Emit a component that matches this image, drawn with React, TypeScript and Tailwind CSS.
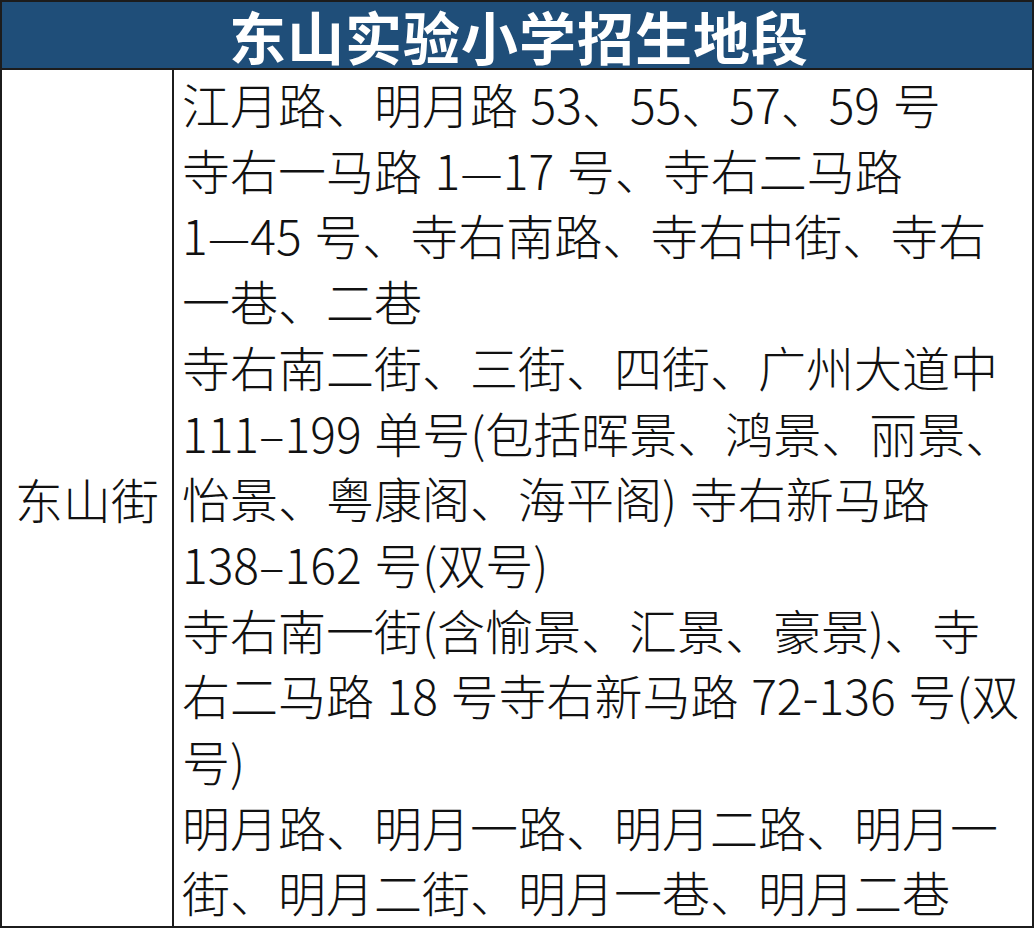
import React from 'react';

// Lines of the catchment list, broken exactly as in the printed table
const lines = [
  '江月路、明月路 53、55、57、59 号',
  '寺右一马路 1—17 号、寺右二马路',
  '1—45 号、寺右南路、寺右中街、寺右',
  '一巷、二巷',
  '寺右南二街、三街、四街、广州大道中',
  '111–199 单号(包括晖景、鸿景、丽景、',
  '怡景、粤康阁、海平阁) 寺右新马路',
  '138–162 号(双号)',
  '寺右南一街(含愉景、汇景、豪景)、寺',
  '右二马路 18 号寺右新马路 72-136 号(双',
  '号)',
  '明月路、明月一路、明月二路、明月一',
  '街、明月二街、明月一巷、明月二巷',
];

export default function App() {
  return (
    <div className="w-[1034px] h-[928px] overflow-hidden bg-white font-['Noto_Sans_CJK_SC',sans-serif]">
      <div className="w-full h-full border-2 border-[#1c1c1c] flex flex-col">
        <div className="h-[68px] shrink-0 bg-[#1f4e79] border-b-2 border-[#1c1c1c] flex items-center justify-center overflow-hidden">
          <span className="text-white font-bold text-[57px] leading-[66px] tracking-[1px] pl-[4px]">东山实验小学招生地段</span>
        </div>
        <div className="flex-1 flex min-h-0">
          <div className="w-[172px] shrink-0 border-r-2 border-[#1c1c1c] flex items-center pl-[13px]">
            <span className="text-[48px] leading-none font-light text-[#111]">东山街</span>
          </div>
          <div className="flex-1 pl-[8px] pt-[1px] font-light">
            {lines.map((line, i) => (
              <div key={i} className="whitespace-nowrap text-[48px] leading-[65.7px] text-[#111] [word-spacing:2px]">
                {line}
              </div>
            ))}
          </div>
        </div>
      </div>
    </div>
  );
}
